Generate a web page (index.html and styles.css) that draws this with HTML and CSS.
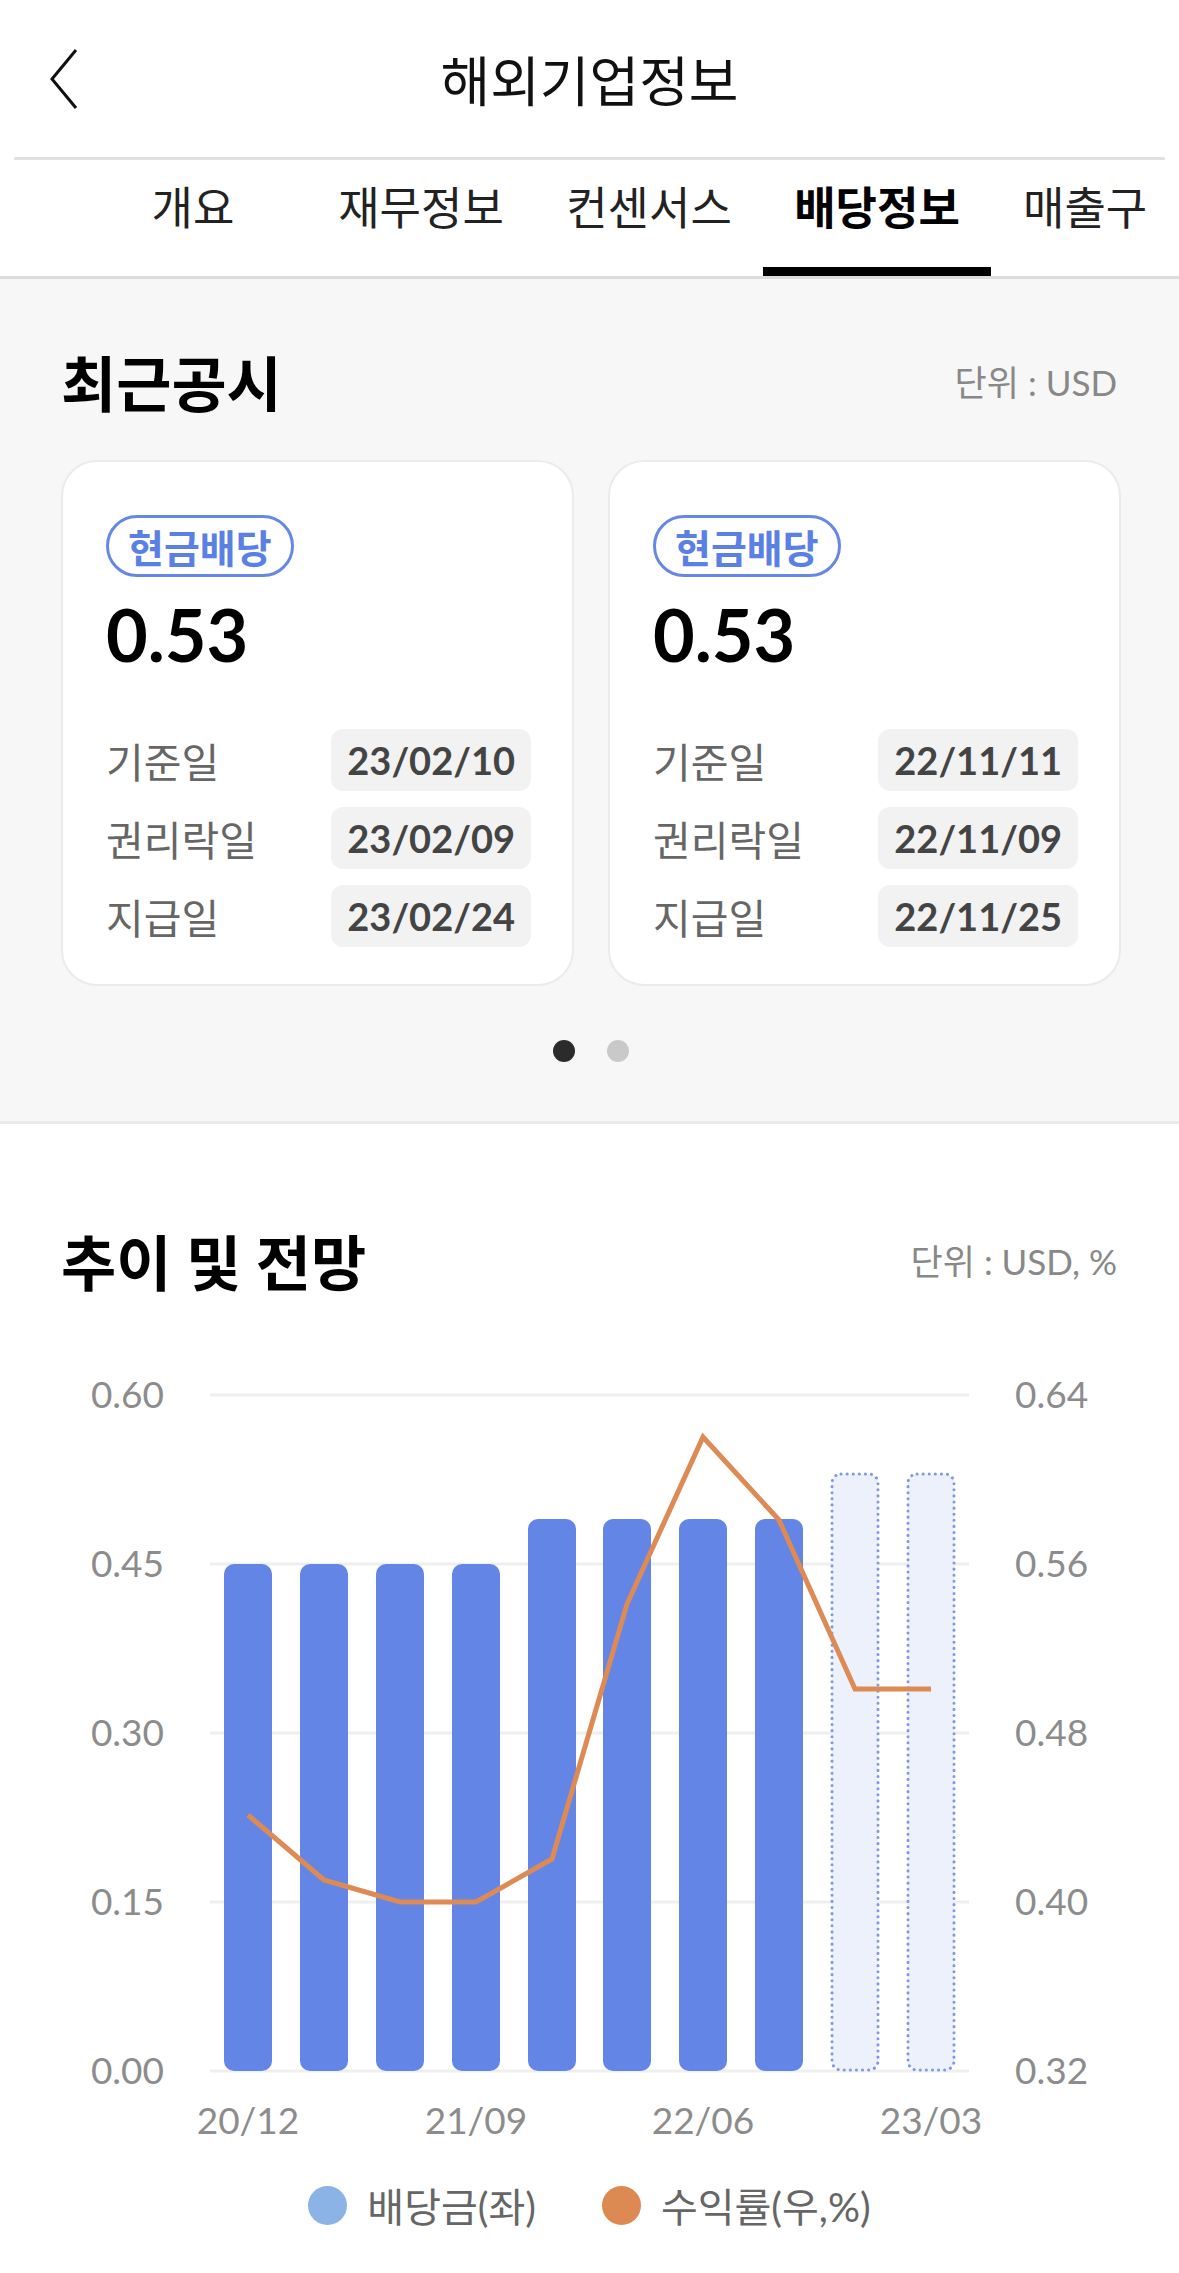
FILE: index.html
```html
<!DOCTYPE html>
<html lang="ko">
<head>
  <meta charset="UTF-8">
  <title>해외기업정보 - 배당정보</title>
  <link rel="stylesheet" href="styles.css">
</head>
<body>
  <header class="top">
    <button class="back" aria-label="뒤로">
      <svg width="30" height="62" viewBox="0 0 30 62"><path d="M27 2 L3 31 L27 60" fill="none" stroke="#111" stroke-width="3"/></svg>
    </button>
    <h1>해외기업정보</h1>
    <span></span>
  </header>
  <div class="sheet-edge"></div>
  <nav class="tabs">
    <div class="tab-track">
      <a class="tab">개요</a>
      <a class="tab">재무정보</a>
      <a class="tab">컨센서스</a>
      <a class="tab on">배당정보</a>
      <a class="tab last">매출구</a>
    </div>
  </nav>

  <section class="recent">
    <div class="sec-head">
      <h2>최근공시</h2>
      <span class="unit">단위 : USD</span>
    </div>
    <div class="cards">
      <div class="card">
        <div class="badge">현금배당</div>
        <div class="amount">0.53</div>
        <div class="rows">
          <div class="row"><span>기준일</span><b>23/02/10</b></div>
          <div class="row"><span>권리락일</span><b>23/02/09</b></div>
          <div class="row"><span>지급일</span><b>23/02/24</b></div>
        </div>
      </div>
      <div class="card">
        <div class="badge">현금배당</div>
        <div class="amount">0.53</div>
        <div class="rows">
          <div class="row"><span>기준일</span><b>22/11/11</b></div>
          <div class="row"><span>권리락일</span><b>22/11/09</b></div>
          <div class="row"><span>지급일</span><b>22/11/25</b></div>
        </div>
      </div>
    </div>
    <div class="dots"><i class="on"></i><i></i></div>
  </section>

  <section class="trend">
    <div class="sec-head">
      <h2>추이 및 전망</h2>
      <span class="unit">단위 : USD, %</span>
    </div>

    <!-- grilla: 0.00 en y=711, 0.60 en y=35 (izq) / 0.32..0.64 (der) -->
    <svg class="chart" width="1179" height="790" viewBox="0 0 1179 790">
      <g class="grid">
        <line x1="210" y1="35" x2="969" y2="35"/>
        <line x1="210" y1="204" x2="969" y2="204"/>
        <line x1="210" y1="373" x2="969" y2="373"/>
        <line x1="210" y1="542" x2="969" y2="542"/>
        <line x1="210" y1="711" x2="969" y2="711"/>
      </g>
      <g class="axis-l">
        <text x="164" y="48">0.60</text>
        <text x="164" y="217">0.45</text>
        <text x="164" y="386">0.30</text>
        <text x="164" y="555">0.15</text>
        <text x="164" y="724">0.00</text>
      </g>
      <g class="axis-r">
        <text x="1015" y="48">0.64</text>
        <text x="1015" y="217">0.56</text>
        <text x="1015" y="386">0.48</text>
        <text x="1015" y="555">0.40</text>
        <text x="1015" y="724">0.32</text>
      </g>
      <g class="bars">
        <rect x="224" y="204" width="48" height="507" rx="10"/>
        <rect x="300" y="204" width="48" height="507" rx="10"/>
        <rect x="376" y="204" width="48" height="507" rx="10"/>
        <rect x="452" y="204" width="48" height="507" rx="10"/>
        <rect x="528" y="159" width="48" height="552" rx="10"/>
        <rect x="603" y="159" width="48" height="552" rx="10"/>
        <rect x="679" y="159" width="48" height="552" rx="10"/>
        <rect x="755" y="159" width="48" height="552" rx="10"/>
      </g>
      <g class="bars-est">
        <rect x="832" y="114" width="46" height="596" rx="9"/>
        <rect x="908" y="114" width="46" height="596" rx="9"/>
      </g>
      <polyline class="yield" points="248,455 324,520 400,542 476,542 552,499 627,244 703,77 779,160 855,329 931,329"/>
      <g class="axis-x">
        <text x="248" y="774">20/12</text>
        <text x="476" y="774">21/09</text>
        <text x="703" y="774">22/06</text>
        <text x="931" y="774">23/03</text>
      </g>
    </svg>

    <div class="legend">
      <span class="item"><i class="dot blue"></i>배당금(좌)</span>
      <span class="item"><i class="dot orange"></i>수익률(우,%)</span>
    </div>
  </section>
</body>
</html>
```

FILE: styles.css
```css
* { box-sizing: border-box; }
body { margin: 0; width: 1179px; font-family: Lato, "Noto Sans CJK KR", sans-serif; color: #111; background: #fff; }

.top { display: grid; grid-template-columns: 1fr auto 1fr; align-items: center; height: 157px; }
.back { justify-self: start; margin-left: 49px; padding: 0; border: 0; background: none; display: flex; }
.top h1 { margin: 0; font-size: 54px; font-weight: 400; color: #111; }
.sheet-edge { height: 3px; margin: 0 14px; background: #e0e0e0; border-radius: 2px; }

.tabs { border-bottom: 3px solid #dcdcdc; }
.tab-track { display: flex; margin-right: 31px; padding-left: 79px; overflow: hidden; }
.tab { flex: 0 0 228px; height: 116px; padding-top: 20px; line-height: 56px; text-align: center; font-size: 45px; color: #222; white-space: nowrap; }
.tab.on { font-weight: 700; color: #000; border-bottom: 9px solid #000; }
.tab.last { text-align: left; padding-left: 32px; }

.sec-head { display: flex; justify-content: space-between; align-items: center; height: 70px; }
.sec-head h2 { margin: 0; font-size: 60px; font-weight: 700; color: #000; }
.unit { font-size: 35px; color: #888; }

.recent { background: #f7f7f7; border-bottom: 3px solid #e9e9e9; padding: 66px 58px 59px 61px; }
.recent .unit { margin-right: 4px; }
.cards { display: grid; grid-template-columns: 513px 513px; gap: 34px; margin-top: 45px; }
.card { background: #fff; border: 2px solid #ebebeb; border-radius: 36px; padding: 53px 41px 37px 43px; }
.badge { display: flex; align-items: center; width: fit-content; height: 62px; padding: 0 19px; border: 3px solid #6687e6; border-radius: 31px; color: #5b80e4; font-size: 39px; font-weight: 700; }
.amount { margin-top: 17px; font-size: 72px; font-weight: 700; line-height: 80px; color: #000; }
.rows { display: flex; flex-direction: column; gap: 16px; margin-top: 55px; }
.row { display: flex; justify-content: space-between; align-items: center; }
.row span { font-size: 41px; color: #666; }
.row b { height: 62px; line-height: 62px; padding: 0 16px; background: #f2f2f2; border-radius: 12px; font-size: 38px; color: #444; }
.dots { display: flex; justify-content: center; gap: 32px; margin-top: 54px; }
.dots i { width: 22px; height: 22px; border-radius: 50%; background: #c9c9c9; }
.dots i.on { background: #2b2b2b; }

.trend { padding-top: 100px; padding-bottom: 40px; }
.trend .sec-head { padding: 0 62px 0 61px; }
.chart { display: block; margin-top: 66px; }
.chart text { font-family: Lato, sans-serif; font-size: 37px; fill: #8c8c8c; }
.grid line { stroke: #efefef; stroke-width: 3; }
.axis-l text { text-anchor: end; }
.axis-x text { text-anchor: middle; }
.bars rect { fill: #6385e6; }
.bars-est rect { fill: #edf1fc; stroke: #7d98e8; stroke-width: 3; stroke-dasharray: 0.1 6; stroke-linecap: round; }
.yield { fill: none; stroke: #dd8a55; stroke-width: 5; stroke-linejoin: miter; }

.legend { display: flex; justify-content: center; align-items: center; gap: 66px; margin-top: 30px; }
.item { display: flex; align-items: center; gap: 20px; height: 50px; font-size: 40px; color: #666; }
.dot { width: 39px; height: 39px; border-radius: 50%; }
.dot.blue { background: #8cb3e6; }
.dot.orange { background: #dc8a52; }
```
